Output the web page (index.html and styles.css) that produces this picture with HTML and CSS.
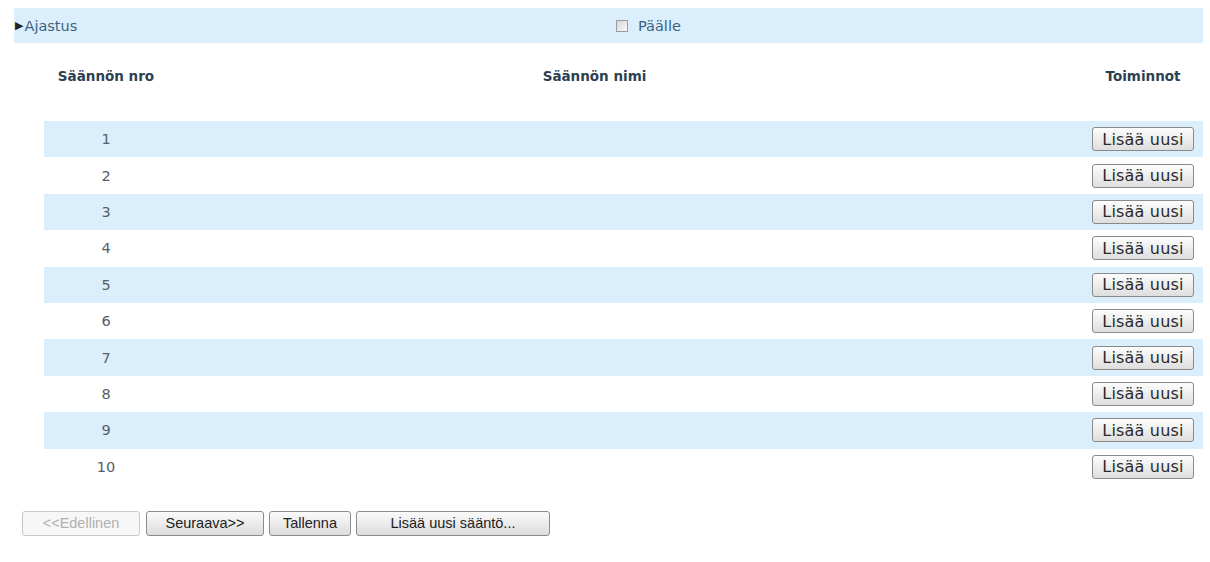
FILE: index.html
```html
<!DOCTYPE html>
<html lang="fi">
<head>
  <meta charset="UTF-8">
  <title>Ajastus</title>
  <link rel="stylesheet" href="styles.css">
</head>
<body>
<div class="page">
  <div class="section-bar">
    <div class="section-title"><span class="arrow">&#9654;</span>Ajastus</div>
    <label class="enable"><input type="checkbox" class="chk"> Päälle</label>
  </div>

  <div class="rules">
    <div class="rules-head">
      <div class="c-nro">Säännön nro</div>
      <div class="c-nimi">Säännön nimi</div>
      <div class="c-act">Toiminnot</div>
    </div>
    <div class="rule-row odd"><div class="c-nro">1</div><div class="c-nimi"></div><div class="c-act"><button class="add-btn">Lisää uusi</button></div></div>
    <div class="rule-row"><div class="c-nro">2</div><div class="c-nimi"></div><div class="c-act"><button class="add-btn">Lisää uusi</button></div></div>
    <div class="rule-row odd"><div class="c-nro">3</div><div class="c-nimi"></div><div class="c-act"><button class="add-btn">Lisää uusi</button></div></div>
    <div class="rule-row"><div class="c-nro">4</div><div class="c-nimi"></div><div class="c-act"><button class="add-btn">Lisää uusi</button></div></div>
    <div class="rule-row odd"><div class="c-nro">5</div><div class="c-nimi"></div><div class="c-act"><button class="add-btn">Lisää uusi</button></div></div>
    <div class="rule-row"><div class="c-nro">6</div><div class="c-nimi"></div><div class="c-act"><button class="add-btn">Lisää uusi</button></div></div>
    <div class="rule-row odd"><div class="c-nro">7</div><div class="c-nimi"></div><div class="c-act"><button class="add-btn">Lisää uusi</button></div></div>
    <div class="rule-row"><div class="c-nro">8</div><div class="c-nimi"></div><div class="c-act"><button class="add-btn">Lisää uusi</button></div></div>
    <div class="rule-row odd"><div class="c-nro">9</div><div class="c-nimi"></div><div class="c-act"><button class="add-btn">Lisää uusi</button></div></div>
    <div class="rule-row"><div class="c-nro">10</div><div class="c-nimi"></div><div class="c-act"><button class="add-btn">Lisää uusi</button></div></div>
  </div>

  <div class="nav-buttons">
    <button class="nav-btn prev" disabled>&lt;&lt;Edellinen</button>
    <button class="nav-btn next">Seuraava&gt;&gt;</button>
    <button class="nav-btn save">Tallenna</button>
    <button class="nav-btn new">Lisää uusi sääntö...</button>
  </div>
</div>
</body>
</html>
```

FILE: styles.css
```css
body { margin: 0; font-family: "DejaVu Sans", Verdana, sans-serif; background: #fff; }
.page { padding: 8px 7px 0 14px; }

/* otsikkopalkki */
.section-bar {
  display: grid;
  grid-template-columns: 602px 1fr;
  align-items: center;
  height: 35px;
  background: #dbeefc;
  font-size: 14.5px;
  color: #3d6381;
}
.section-title { display: flex; align-items: center; }
.arrow { font-size: 11px; color: #222; margin: 0 1px 0 1px; }
.enable { display: flex; align-items: center; gap: 10px; }
.chk {
  appearance: none;
  margin: 0;
  width: 12px;
  height: 12px;
  border: 1px solid #9c9c9c;
  background: linear-gradient(135deg, #d6d6d6, #fafafa);
}

/* sääntötaulukko */
.rules { margin-left: 30px; }
.rules-head, .rule-row {
  display: grid;
  grid-template-columns: 124px 1fr 120px;
  align-items: center;
}
.rules-head {
  padding: 25px 0 37px;
  line-height: 16px;
  font-size: 13.5px;
  font-weight: bold;
  color: #2d3f52;
}
.rules-head .c-nro { text-align: center; }
.rules-head .c-nimi { text-align: center; padding-right: 62px; }
.rules-head .c-act { text-align: center; }

.rule-row { height: 36.4px; font-size: 14.5px; color: #55606a; }
.rule-row.odd { background: #dbeefc; }
.rule-row .c-nro { text-align: center; }
.rule-row .c-act { display: flex; justify-content: center; }

.add-btn {
  width: 102px;
  height: 24px;
  padding: 0;
  font-family: "DejaVu Sans", Verdana, sans-serif;
  font-size: 16px;
  letter-spacing: 0.2px;
  color: #2a2a2a;
  border: 1px solid #8a8a8a;
  border-radius: 3px;
  background: linear-gradient(#fdfdfd, #dedede);
}

/* alapainikkeet */
.nav-buttons { display: flex; gap: 5px; margin: 26px 0 0 8px; }
.nav-btn {
  height: 25px;
  padding: 0;
  font-family: "Liberation Sans", Arial, sans-serif;
  font-size: 14.5px;
  color: #222;
  border: 1px solid #8c8c8c;
  border-radius: 3px;
  background: linear-gradient(#fbfbfb, #dcdcdc);
}
.nav-btn.prev { width: 118px; color: #b0b0b0; border-color: #c8c8c8; background: #f7f7f7; }
.nav-btn.next { width: 118px; margin-left: 1px; }
.nav-btn.save { width: 82px; }
.nav-btn.new { width: 194px; }
```
